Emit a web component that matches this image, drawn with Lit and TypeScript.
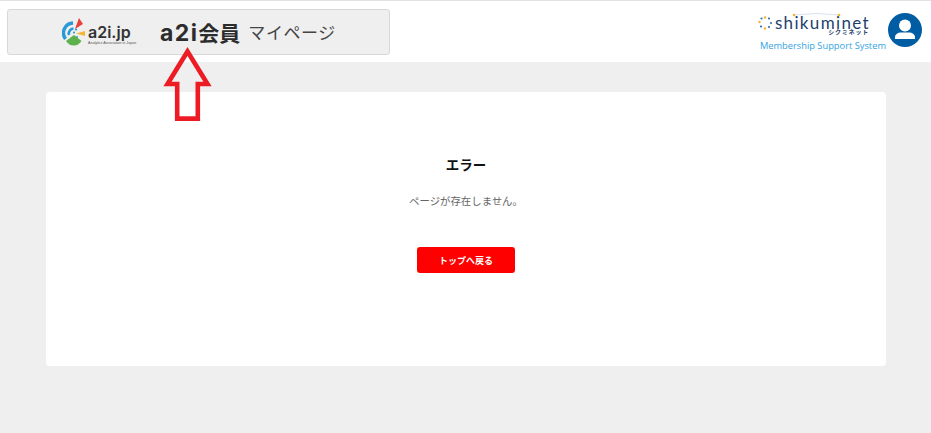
import { LitElement, html, css } from "lit";
import { customElement } from "lit/decorators.js";

@customElement("app-root")
export class AppRoot extends LitElement {
  static styles = css`
    :host {
      display: block;
      position: relative;
      width: 931px;
      height: 433px;
      overflow: hidden;
      background: #efefef;
      font-family: "Noto Sans CJK JP", "Noto Sans", sans-serif;
      color: #222;
    }

    .header {
      display: flex;
      justify-content: space-between;
      box-sizing: border-box;
      height: 62px;
      background: #fff;
      border-top: 1px solid #e2e2e2;
      padding: 8px 9px 0 7px;
    }

    .banner {
      display: flex;
      align-items: center;
      box-sizing: border-box;
      width: 383px;
      height: 46px;
      padding-left: 54px;
      background: #efefef;
      border: 1px solid #d8d8d8;
      border-radius: 3px;
    }

    .logo {
      display: flex;
      align-items: center;
      width: 98px;
    }

    .logo-words {
      display: flex;
      flex-direction: column;
      margin-left: 3px;
      padding-top: 5px;
    }

    .logo-name {
      font-family: "Inter", sans-serif;
      font-size: 16px;
      font-weight: 600;
      line-height: 18px;
      color: #333;
    }

    .logo-sub {
      font-family: "Liberation Sans", sans-serif;
      font-size: 3.6px;
      line-height: 5px;
      white-space: nowrap;
      color: #555;
    }

    .member {
      font-size: 21px;
      font-weight: 700;
      line-height: 30px;
      color: #2c2c2c;
      white-space: nowrap;
    }

    .member b {
      font-family: "Inter", sans-serif;
      font-weight: 700;
      font-size: 23px;
      letter-spacing: 1.4px;
    }

    .mypage {
      margin-left: 8px;
      font-size: 17px;
      line-height: 30px;
      letter-spacing: 0.6px;
      color: #444;
      white-space: nowrap;
    }

    .right {
      display: flex;
      align-items: flex-start;
      gap: 2px;
    }

    .brand {
      display: flex;
      flex-direction: column;
      align-items: flex-end;
      padding-top: 5px;
    }

    .brand-top {
      position: relative;
      display: flex;
      align-items: center;
      height: 17px;
      margin-right: 16px;
    }

    .brand-arc {
      position: absolute;
      left: 34px;
      top: -2px;
    }

    .brand-name {
      font-family: "Lato", sans-serif;
      font-size: 17px;
      line-height: 17px;
      letter-spacing: 1.35px;
      color: #1f3f6e;
    }

    .brand-kana {
      font-size: 6px;
      font-weight: 700;
      line-height: 6px;
      letter-spacing: 0.8px;
      margin: -2px 17px 0 0;
      color: #1f3f6e;
    }

    .brand-sub {
      font-family: "Open Sans", sans-serif;
      font-size: 9.3px;
      line-height: 13px;
      margin-top: 4px;
      color: #35a3e2;
      white-space: nowrap;
    }

    .avatar {
      display: block;
      margin-top: 4px;
    }

    .card {
      display: flex;
      flex-direction: column;
      align-items: center;
      box-sizing: border-box;
      width: 840px;
      height: 274px;
      margin: 30px 0 0 46px;
      padding-top: 62px;
      background: #fff;
      border-radius: 4px;
    }

    .title {
      font-size: 13.5px;
      font-weight: 700;
      line-height: 20px;
      color: #111;
    }

    .message {
      margin-top: 19px;
      font-size: 10.4px;
      line-height: 15px;
      color: #666;
    }

    .back {
      display: block;
      box-sizing: border-box;
      width: 98px;
      height: 26px;
      margin-top: 39px;
      padding: 0;
      border: none;
      border-radius: 3px;
      background: #ff0000;
      color: #fff;
      font-family: inherit;
      font-size: 9px;
      font-weight: 700;
    }

    .arrow {
      position: absolute;
      left: 162px;
      top: 46px;
    }
  `;

  render() {
    return html`
      <header class="header">
        <div class="banner">
          <div class="logo">
            <svg width="23" height="28" viewBox="0 0 23 28">
              <path d="M17 0 L21 6 L13 11 Z" fill="#e8413c" />
              <path d="M11 5 A10 10 0 0 0 3.5 21" fill="none" stroke="#2a9ad6" stroke-width="3.4" />
              <path d="M11.5 10.5 A5 5 0 0 0 7 17" fill="none" stroke="#2a9ad6" stroke-width="2.6" />
              <path d="M14 15.5 L23 13 V18 Z" fill="#f2b632" />
              <circle cx="14" cy="11.5" r="1.1" fill="#2a9ad6" />
              <circle cx="12" cy="14.5" r="1.1" fill="#2a9ad6" />
              <circle cx="15" cy="19" r="1" fill="#2a9ad6" />
              <path d="M12 17 L19.5 23 A9 9 0 0 1 4 23 Z" fill="#5cb14a" />
            </svg>
            <div class="logo-words">
              <span class="logo-name">a2i.jp</span>
              <span class="logo-sub">Analytics Association in Japan</span>
            </div>
          </div>
          <span class="member"><b>a2i</b>会員</span>
          <span class="mypage">マイページ</span>
        </div>
        <div class="right">
          <div class="brand">
            <div class="brand-top">
              <svg width="17" height="14" viewBox="0 0 17 14">
                <g fill="#2e6fb5">
                  <circle cx="7" cy="1.5" r="1.2" fill="#f2b632" />
                  <circle cx="11" cy="2.5" r="1.1" />
                  <circle cx="13" cy="7" r="1.1" />
                  <circle cx="11" cy="11" r="1.1" />
                  <circle cx="7" cy="12.5" r="1.2" fill="#f2b632" />
                  <circle cx="3" cy="10.5" r="1.1" />
                  <circle cx="1.5" cy="6" r="1.2" fill="#f2b632" />
                  <circle cx="3.5" cy="2.5" r="1.1" />
                </g>
              </svg>
              <span class="brand-name">shikuminet</span>
              <svg class="brand-arc" width="50" height="8" viewBox="0 0 50 8">
                <path d="M2 3 Q24 0 47 3" fill="none" stroke="#b9cfe6" stroke-width="0.6" />
                <circle cx="2" cy="3" r="1.3" fill="#f2b632" />
                <circle cx="47" cy="3" r="1.3" fill="#f2b632" />
              </svg>
            </div>
            <span class="brand-kana">シクミネット</span>
            <span class="brand-sub">Membership Support System</span>
          </div>
          <svg class="avatar" width="34" height="34" viewBox="0 0 34 34">
            <circle cx="17" cy="17" r="17" fill="#005da4" />
            <circle cx="17" cy="12.5" r="6" fill="#fff" />
            <path d="M7 26 V24.5 C7 21 10 19.5 13 19.5 H21 C24 19.5 27 21 27 24.5 V26 Z" fill="#fff" />
          </svg>
        </div>
      </header>
      <main class="card">
        <div class="title">エラー</div>
        <div class="message">ページが存在しません。</div>
        <button class="back">トップへ戻る</button>
      </main>
      <svg class="arrow" width="52" height="78" viewBox="0 0 52 78">
        <path
          d="M25.5 5.5 L45.5 38 H35.8 V72.6 H15.2 V38 H5.5 Z"
          fill="none"
          stroke="#ed1c24"
          stroke-width="4.6"
          stroke-linejoin="miter"
        />
      </svg>
    `;
  }
}
